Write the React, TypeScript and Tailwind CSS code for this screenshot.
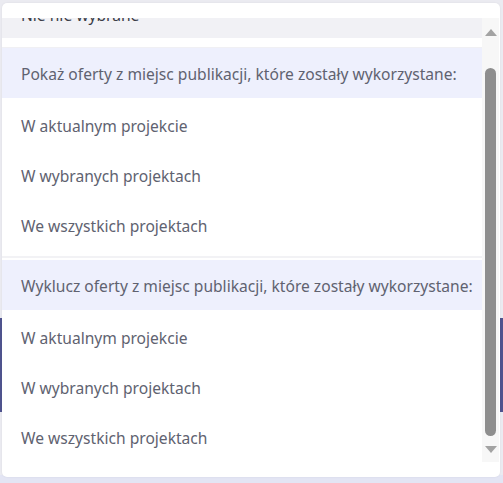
import React from 'react';

const groups = [
  {
    title: 'Pokaż oferty z miejsc publikacji, które zostały wykorzystane:',
    items: ['W aktualnym projekcie', 'W wybranych projektach', 'We wszystkich projektach'],
  },
  {
    title: 'Wyklucz oferty z miejsc publikacji, które zostały wykorzystane:',
    items: ['W aktualnym projekcie', 'W wybranych projektach', 'We wszystkich projektach'],
  },
];

const Scrollbar: React.FC = () => (
  <div className="w-[17px] shrink-0 bg-[#f7f7f7] flex flex-col items-center">
    <div className="h-[22px] flex items-end justify-center pb-[4px]">
      <div className="w-0 h-0 border-l-[6px] border-r-[6px] border-b-[7px] border-l-transparent border-r-transparent border-b-[#a3a3a3]" />
    </div>
    <div className="flex-1 w-full flex justify-center pt-[28px] pb-[2px]">
      <div className="w-[11px] h-full rounded-full bg-[#8e8e8e]" />
    </div>
    <div className="h-[24px] flex items-start justify-center pt-[8px]">
      <div className="w-0 h-0 border-l-[6px] border-r-[6px] border-t-[7px] border-l-transparent border-r-transparent border-t-[#a3a3a3]" />
    </div>
  </div>
);

export default function App() {
  return (
    <div
      className="relative w-[503px] h-[483px] bg-[#ebebf1] pt-[3px] pl-[2px] overflow-hidden"
      style={{ fontFamily: '"Noto Sans", "Open Sans", Arial, sans-serif' }}
    >
      {/* bits of the page behind the popup */}
      <div className="absolute left-0 top-[318px] w-[3px] h-[94px] bg-[#50548f]" />
      <div className="absolute right-0 top-[318px] w-[4px] h-[94px] bg-[#50548f]" />
      <div className="absolute left-0 bottom-0 w-full h-[8px] bg-[#e3e5f4]" />

      <div className="relative w-[498px] h-[474px] bg-white rounded-[5px] shadow-[0_0_2px_rgba(0,0,0,0.08)] flex flex-col pt-[15px]">
        <div className="flex h-[444px] pr-[1px]">
          <div className="flex-1 overflow-hidden">
            <div className="mt-[-30px] text-[15.6px] text-[#606270]">
              <div className="h-[50px] bg-[#f1f1f5] flex items-center pl-[19px] pt-[6px] text-[#3b3d48]">Nie nie wybrane</div>

              {groups.map((g, gi) => (
                <div key={gi}>
                  {gi === 0 ? (
                    <div className="h-[10px] border-b border-[#f0f0f4]" />
                  ) : (
                    <div className="h-[10px] pt-[6px]">
                      <div className="h-[2px] bg-[#f2f2f5]" />
                    </div>
                  )}
                  <div className="h-[50px] bg-[#eef0fd] flex items-center pl-[19px] pt-[4px] whitespace-nowrap">{g.title}</div>
                  <div className="pt-[2px]">
                    {g.items.map((it) => (
                      <div key={it} className="h-[50px] flex items-center pl-[19px] pt-[4px]">
                        {it}
                      </div>
                    ))}
                  </div>
                </div>
              ))}
            </div>
          </div>
          <Scrollbar />
        </div>
      </div>
    </div>
  );
}
